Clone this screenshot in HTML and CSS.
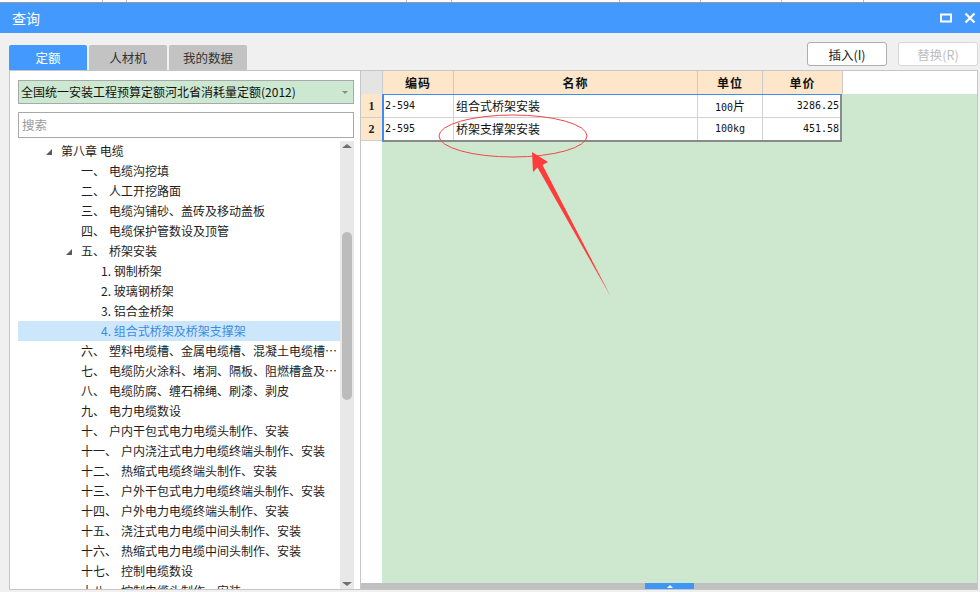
FILE: index.html
```html
<!DOCTYPE html>
<html lang="zh">
<head>
<meta charset="utf-8">
<title>查询</title>
<link rel="stylesheet" href="styles.css">
</head>
<body>
<div class="topstrip">
  <span class="ts ts1"></span><span class="ts ts2"></span><span class="ts ts3"></span><span class="ts ts4"></span><span class="ts ts5"></span><span class="ts ts6"></span><span class="ts ts7"></span><span class="ts ts8"></span><span class="ts ts9"></span>
</div>
<div class="titlebar">
  <span class="title">查询</span>
  <div class="winctrls">
    <svg class="wbtn" width="12" height="10" viewBox="0 0 12 10"><rect x="1" y="1.5" width="10" height="7" fill="none" stroke="#fff" stroke-width="2"/></svg>
    <svg class="wbtn" width="12" height="12" viewBox="0 0 12 12"><path d="M1.5 1.5 L10.5 10.5 M10.5 1.5 L1.5 10.5" stroke="#fff" stroke-width="2.2"/></svg>
  </div>
</div>
<div class="toolbar">
  <div class="tabs">
    <div class="tab active">定额</div>
    <div class="tab">人材机</div>
    <div class="tab">我的数据</div>
  </div>
  <div class="actions">
    <button class="btn">插入(I)</button>
    <button class="btn" disabled>替换(R)</button>
  </div>
</div>
<div class="main">
  <div class="left">
    <div class="select">
      <span class="select-text">全国统一安装工程预算定额河北省消耗量定额(2012)</span>
      <span class="caret"></span>
    </div>
    <div class="search">搜索</div>
    <div class="tree">
      <div class="tree-list">
        <div class="node l1"><span class="tog open"></span><span class="txt">第八章 电缆</span></div>
        <div class="node l2"><span class="tog"></span><span class="num">一、</span><span class="txt">电缆沟挖填</span></div>
        <div class="node l2"><span class="tog"></span><span class="num">二、</span><span class="txt">人工开挖路面</span></div>
        <div class="node l2"><span class="tog"></span><span class="num">三、</span><span class="txt">电缆沟铺砂、盖砖及移动盖板</span></div>
        <div class="node l2"><span class="tog"></span><span class="num">四、</span><span class="txt">电缆保护管数设及顶管</span></div>
        <div class="node l2"><span class="tog open"></span><span class="num">五、</span><span class="txt">桥架安装</span></div>
        <div class="node l3"><span class="tog"></span><span class="txt">1. 钢制桥架</span></div>
        <div class="node l3"><span class="tog"></span><span class="txt">2. 玻璃钢桥架</span></div>
        <div class="node l3"><span class="tog"></span><span class="txt">3. 铝合金桥架</span></div>
        <div class="node l3 selected"><span class="tog"></span><span class="txt">4. 组合式桥架及桥架支撑架</span></div>
        <div class="node l2"><span class="tog"></span><span class="num">六、</span><span class="txt">塑料电缆槽、金属电缆槽、混凝土电缆槽安装</span></div>
        <div class="node l2"><span class="tog"></span><span class="num">七、</span><span class="txt">电缆防火涂料、堵洞、隔板、阻燃槽盒及防火带安装</span></div>
        <div class="node l2"><span class="tog"></span><span class="num">八、</span><span class="txt">电缆防腐、缠石棉绳、刷漆、剥皮</span></div>
        <div class="node l2"><span class="tog"></span><span class="num">九、</span><span class="txt">电力电缆数设</span></div>
        <div class="node l2"><span class="tog"></span><span class="num">十、</span><span class="txt">户内干包式电力电缆头制作、安装</span></div>
        <div class="node l2"><span class="tog"></span><span class="num">十一、</span><span class="txt">户内浇注式电力电缆终端头制作、安装</span></div>
        <div class="node l2"><span class="tog"></span><span class="num">十二、</span><span class="txt">热缩式电缆终端头制作、安装</span></div>
        <div class="node l2"><span class="tog"></span><span class="num">十三、</span><span class="txt">户外干包式电力电缆终端头制作、安装</span></div>
        <div class="node l2"><span class="tog"></span><span class="num">十四、</span><span class="txt">户外电力电缆终端头制作、安装</span></div>
        <div class="node l2"><span class="tog"></span><span class="num">十五、</span><span class="txt">浇注式电力电缆中间头制作、安装</span></div>
        <div class="node l2"><span class="tog"></span><span class="num">十六、</span><span class="txt">热缩式电力电缆中间头制作、安装</span></div>
        <div class="node l2"><span class="tog"></span><span class="num">十七、</span><span class="txt">控制电缆数设</span></div>
        <div class="node l2"><span class="tog"></span><span class="num">十八、</span><span class="txt">控制电缆头制作、安装</span></div>
      </div>
      <div class="vscroll">
        <span class="arr up"></span>
        <div class="vtrack"><div class="vthumb"></div></div>
        <span class="arr down"></span>
      </div>
    </div>
  </div>
  <div class="right">
    <div class="thead">
      <div class="th c-rn"></div>
      <div class="th c-code">编码</div>
      <div class="th c-name">名称</div>
      <div class="th c-unit">单位</div>
      <div class="th c-price">单价</div>
      <div class="th-fill"></div>
    </div>
    <div class="tbody">
      <div class="gutter">
        <div class="rn rn1">1</div>
        <div class="rn">2</div>
      </div>
      <div class="grid">
        <div class="block">
          <div class="row first">
            <div class="td d-code mono">2-594</div>
            <div class="td d-name">组合式桥架安装</div>
            <div class="td d-unit"><span class="mono">100</span>片</div>
            <div class="td d-price mono">3286.25</div>
          </div>
          <div class="row">
            <div class="td d-code mono">2-595</div>
            <div class="td d-name">桥架支撑架安装</div>
            <div class="td d-unit mono">100kg</div>
            <div class="td d-price mono">451.58</div>
          </div>
        </div>
      </div>
    </div>
    <div class="hscroll"><div class="hhandle"><span class="hh-tri"></span></div></div>
  </div>
</div>
<svg class="annot" width="980" height="592" viewBox="0 0 980 592">
  <ellipse cx="513" cy="136" rx="74" ry="21" fill="none" stroke="#f0484a" stroke-width="1"/>
  <polygon points="532,152 548,162 542.5,165 611,297 537.5,167.5 533,172" fill="#ff3b3b"/>
</svg>
</body>
</html>
```
FILE: styles.css
```css
* { box-sizing: border-box; }
html, body { margin: 0; padding: 0; }
body {
  width: 980px;
  height: 592px;
  overflow: hidden;
  background: #f0f0f0;
  font-family: "Noto Sans CJK SC", "Microsoft YaHei", sans-serif;
  font-size: 12px;
  color: #1a1a1a;
  position: relative;
}

/* thin strip above the dialog */
.topstrip {
  display: grid;
  grid-template-columns: 103px 24px 280px 45px 168px 81px 81px 82px 1fr;
  height: 3px;
  background: #fff;
  border-bottom: 1px solid #9a9a9a;
}
.ts { border-right: 1px solid #b8b8b8; }
.ts9 { border-right: none; }

.titlebar {
  height: 30px;
  background: #4499ff;
  display: flex;
  align-items: center;
  justify-content: space-between;
  padding: 0 4px 0 12px;
}
.title {
  color: #fff;
  font-size: 14px;
  line-height: 30px;
}
.winctrls { display: flex; align-items: center; gap: 12px; }
.wbtn { display: block; }

.toolbar {
  height: 37px;
  display: flex;
  justify-content: space-between;
  padding: 0 2px 0 9px;
}
.tabs {
  display: flex;
  gap: 2px;
  align-self: flex-end;
}
.tab {
  width: 78px;
  height: 25px;
  line-height: 25px;
  text-align: center;
  background: #c3c3c3;
  color: #333;
  font-size: 12.5px;
  border-radius: 2px 2px 0 0;
}
.tab.active { background: #4499ff; color: #fff; }
.actions {
  display: flex;
  gap: 11px;
  padding-top: 9px;
}
.btn {
  width: 80px;
  height: 24px;
  background: #fff;
  border: 1px solid #adadad;
  border-radius: 3px;
  font-family: inherit;
  font-size: 12.5px;
  color: #222;
  padding: 0;
}
.btn:disabled { border-color: #d8d8d8; color: #bdbdbd; }

.main {
  margin: 0 2px 0 9px;
  height: 520px;
  border: 1px solid #c6c6c6;
  display: flex;
  background: #fff;
}

/* left panel */
.left {
  width: 351px;
  border-right: 1px solid #c6c6c6;
  padding: 9px 6px 0 8px;
  display: flex;
  flex-direction: column;
}
.select {
  height: 24px;
  background: #cde8d0;
  border: 1px solid #a9a9a9;
  display: flex;
  align-items: center;
  justify-content: space-between;
  padding: 0 5px 0 2px;
}
.select-text { font-size: 12px; color: #111; line-height: 22px; }
.caret {
  width: 0; height: 0;
  border-left: 3px solid transparent;
  border-right: 3px solid transparent;
  border-top: 3px solid #8a8a8a;
}
.search {
  margin-top: 8px;
  height: 26px;
  border: 1px solid #a9a9a9;
  color: #9a9a9a;
  line-height: 24px;
  padding-left: 3px;
  font-size: 12.5px;
}
.tree {
  margin-top: 3px;
  flex: 1;
  display: flex;
  overflow: hidden;
  min-height: 0;
}
.tree-list {
  width: 322px;
  overflow: hidden;
}
.node {
  height: 20px;
  line-height: 20px;
  display: flex;
  align-items: center;
  white-space: nowrap;
  color: #1e1e1e;
  font-size: 12px;
}
.node.l1 { padding-left: 27px; }
.node.l2 { padding-left: 47px; }
.node.l3 { padding-left: 67px; }
.tog {
  width: 16px;
  height: 20px;
  flex: none;
  position: relative;
}
.tog.open::before {
  content: "";
  position: absolute;
  left: 1px;
  top: 8px;
  width: 0; height: 0;
  border-left: 6px solid transparent;
  border-bottom: 6px solid #5a5a5a;
}
.num { flex: none; margin-right: 4px; }
.txt {
  overflow: hidden;
  text-overflow: ellipsis;
  min-width: 0;
}
.node.selected { background: #cce6fb; color: #3b8de2; }

.vscroll {
  width: 14px;
  background: #e8e8e8;
  display: flex;
  flex-direction: column;
  align-items: center;
}
.arr {
  width: 0; height: 0;
  border-left: 5px solid transparent;
  border-right: 5px solid transparent;
  flex: none;
}
.arr.up { border-bottom: 4px solid #6f6f6f; margin-top: 3px; }
.arr.down { border-top: 4px solid #6f6f6f; margin-bottom: 3px; }
.vtrack { flex: 1; width: 100%; padding-top: 84px; display: flex; justify-content: center; }
.vthumb {
  width: 10px;
  height: 168px;
  background: #bcbcbc;
  border-radius: 5px;
}

/* right panel */
.right {
  flex: 1;
  display: flex;
  flex-direction: column;
  min-width: 0;
}
.thead {
  height: 23px;
  display: flex;
  flex: none;
}
.th {
  height: 23px;
  line-height: 23px;
  text-align: center;
  font-weight: bold;
  font-size: 12px;
  letter-spacing: 1px;
  background: #fde6c9;
  border-right: 1px solid #cbcbcb;
  color: #111;
}
.th.c-rn { width: 22px; background: #e4e4e4; }
.c-code { width: 71px; }
.c-name { width: 244px; }
.c-unit { width: 65px; }
.c-price { width: 80px; }
.th-fill { flex: 1; background: #fff; }

.tbody {
  flex: 1;
  display: flex;
  min-height: 0;
}
.gutter { width: 21px; background: #fff; flex: none; }
.rn {
  height: 23px;
  background: #fde6c9;
  border-bottom: 1px solid #cfcfcf;
  font-family: "Liberation Serif", serif;
  font-weight: bold;
  font-size: 12px;
  text-align: center;
  line-height: 22px;
  color: #222;
}
.rn1 { height: 24px; line-height: 24px; }
.grid { flex: 1; background: #cde8cf; }
.block {
  width: 460px;
  background: #fff;
  border-top: 1px solid #3a8ef2;
  border-left: 2px solid #3a8ef2;
  border-right: 2px solid #8a8a8a;
  border-bottom: 2px solid #8a8a8a;
}
.row { display: flex; height: 22px; }
.row.first { height: 23px; border-bottom: 1px solid #d2d2d2; }
.td {
  border-right: 1px solid #d2d2d2;
  line-height: 22px;
  font-size: 12px;
  white-space: nowrap;
  color: #111;
}
.mono { font-family: "DejaVu Sans Mono", "Liberation Mono", monospace; font-size: 10px; }
.d-code { width: 70px; padding-left: 1px; }
.d-name { width: 244px; padding-left: 2px; }
.d-unit { width: 65px; text-align: center; }
.d-price { width: 77px; text-align: right; padding-right: 1px; border-right: none; }

.hscroll {
  height: 6px;
  flex: none;
  background: #c0c0c0;
  display: flex;
}
.hhandle {
  margin-left: 284px;
  width: 49px;
  background: #3e97f7;
  display: flex;
  justify-content: center;
  align-items: center;
}
.hh-tri {
  width: 0; height: 0;
  border-left: 3px solid transparent;
  border-right: 3px solid transparent;
  border-bottom: 3px solid #fff;
}

.annot {
  position: absolute;
  left: 0;
  top: 0;
  pointer-events: none;
}
```
